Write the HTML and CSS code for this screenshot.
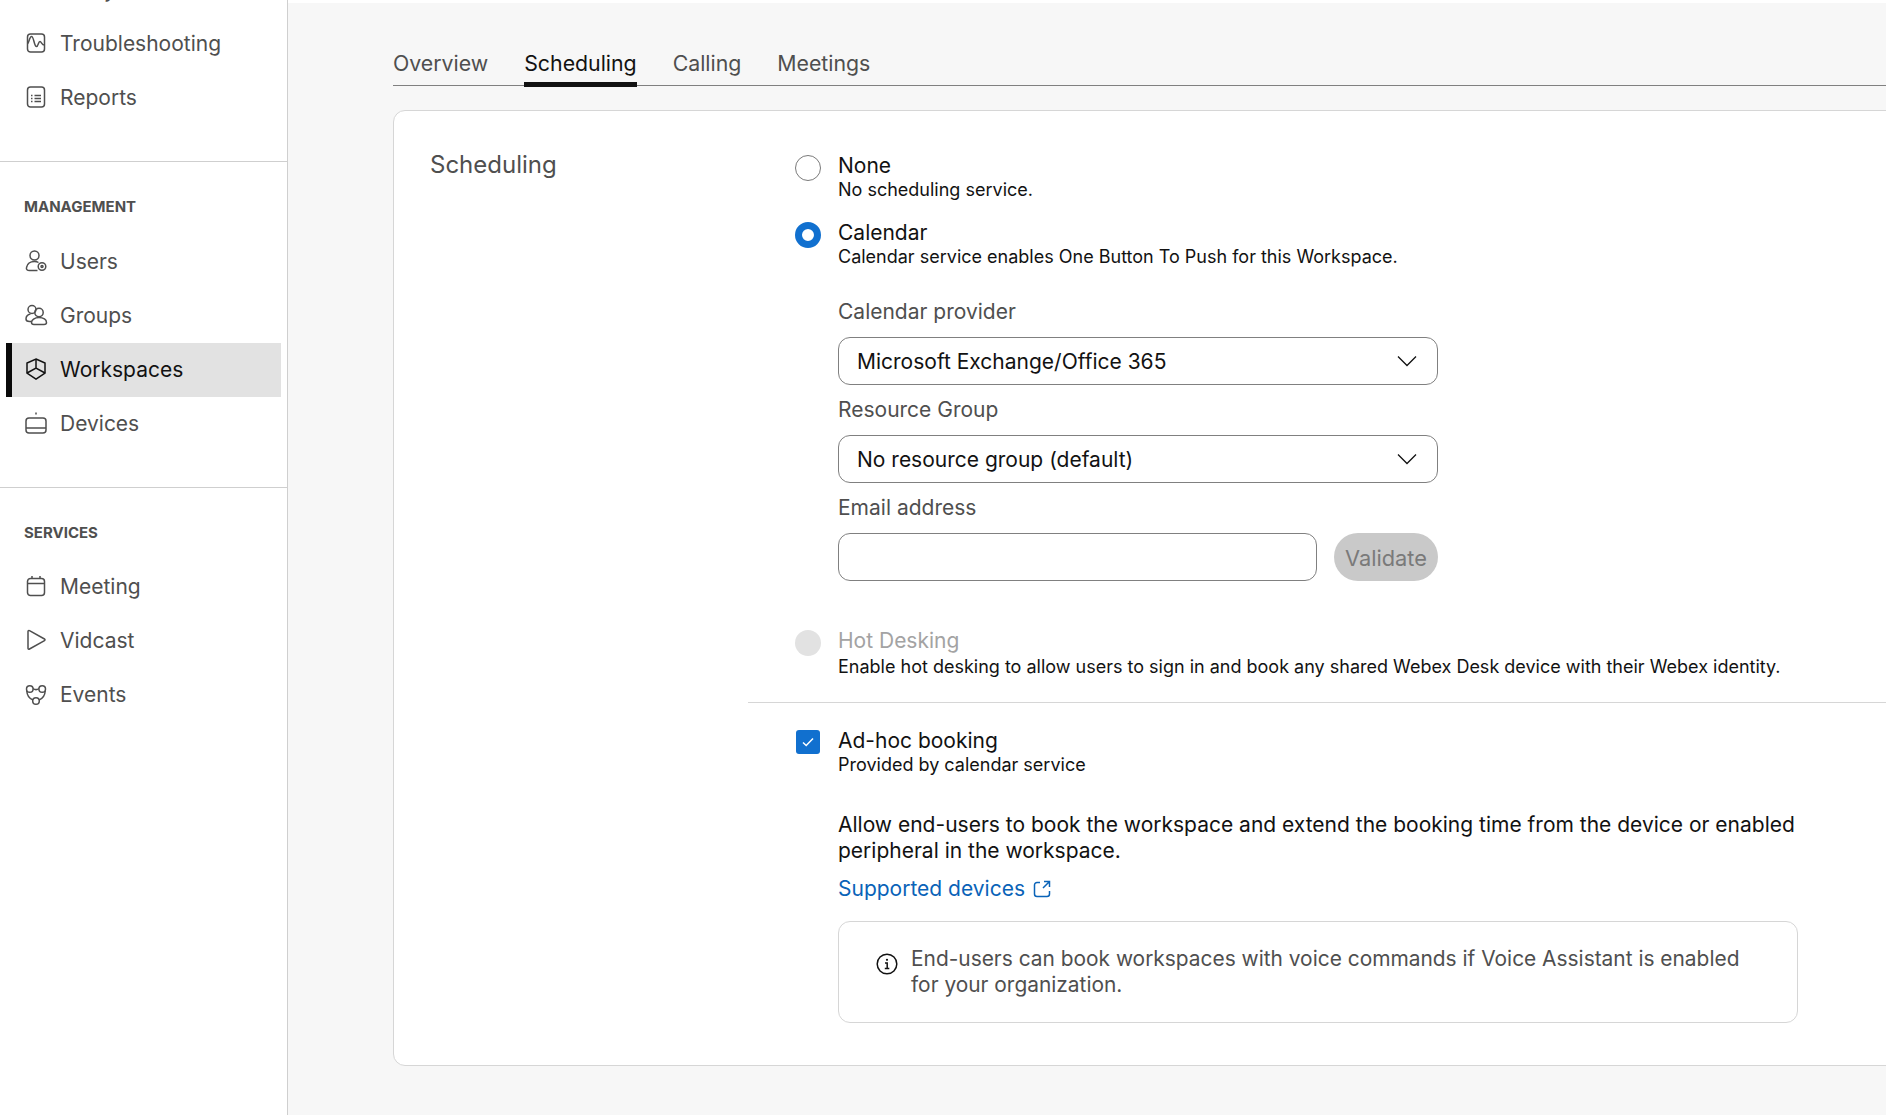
FILE: index.html
```html
<!DOCTYPE html>
<html lang="en">
<head>
  <meta charset="UTF-8">
  <title>Workspaces - Scheduling</title>
  <link rel="stylesheet" href="styles.css">
</head>
<body>
  <aside class="sidebar">
    <ul class="nav nav-first">
      <li class="nav-item"><span class="nav-icon"></span>Analytics</li>
      <li class="nav-item">
        <svg class="nav-icon" viewBox="0 0 24 24"><rect x="3.5" y="3" width="17" height="18" rx="3"/><path d="M3.500 13c1.500-1 2-7.500 4-7.500 2.500 0 2.500 10 5 10 1.800 0 1.700-5 3.500-5 1.500 0 1.500 3.500 4.500 3.500"/></svg>
        Troubleshooting
      </li>
      <li class="nav-item">
        <svg class="nav-icon" viewBox="0 0 24 24"><rect x="3.5" y="2" width="17" height="20" rx="3"/><path d="M7 10.500h1.500M10.500 10.500h6.500M7 13.500h1.500M10.500 13.500h6.500M7 16.500h1.500M10.500 16.500h6.500"/></svg>
        Reports
      </li>
    </ul>
    <div class="nav-section">
      <h2 class="nav-title">MANAGEMENT</h2>
      <ul class="nav">
        <li class="nav-item">
          <svg class="nav-icon" viewBox="0 0 24 24"><circle cx="10.500" cy="6.500" r="4.500"/><path d="M13.500 21.500H5.500c-2.200 0-3.500-1-3-3 .7-3.500 3.500-6 8-6 1.500 0 3 .3 4 1"/><circle cx="18" cy="17.500" r="3.800"/><circle cx="18" cy="17.500" r="1"/></svg>
          Users
        </li>
        <li class="nav-item">
          <svg class="nav-icon" viewBox="0 0 24 24"><circle cx="8" cy="6.500" r="4"/><circle cx="15" cy="9.500" r="4.200"/><path d="M6.500 11c-3 .6-4.500 2.700-4.500 5 0 1.500 1 2.500 3.500 2.500h1.500"/><path d="M15 14.500c-4.500 0-7.500 2.500-7.500 5 0 1.500 1 2 2.500 2h10c1.600 0 2.500-.7 2.500-2 0-2.700-3-5-7.500-5z"/></svg>
          Groups
        </li>
        <li class="nav-item active">
          <svg class="nav-icon" viewBox="0 0 24 24"><path d="M12 2l9 4v10l-9 6-9-6V6z"/><path d="M12 2v9M3 16l9-5 9 5"/></svg>
          Workspaces
        </li>
        <li class="nav-item">
          <svg class="nav-icon" viewBox="0 0 24 24"><rect x="2" y="7" width="20" height="15" rx="3"/><path d="M2 17h20M12 1.500v2"/></svg>
          Devices
        </li>
      </ul>
    </div>
    <div class="nav-section">
      <h2 class="nav-title">SERVICES</h2>
      <ul class="nav">
        <li class="nav-item">
          <svg class="nav-icon" viewBox="0 0 24 24"><rect x="3.5" y="4.500" width="17" height="17" rx="3"/><path d="M3.500 9.500h17M8 2v2.500M16 2v2.500"/></svg>
          Meeting
        </li>
        <li class="nav-item">
          <svg class="nav-icon" viewBox="0 0 24 24"><path d="M4 3.500c0-.9.800-1.200 1.500-.8l15 8.300c.7.400.7 1.300 0 1.700l-15 8.300c-.7.400-1.500 0-1.500-.8z"/></svg>
          Vidcast
        </li>
        <li class="nav-item">
          <svg class="nav-icon" viewBox="0 0 24 24"><circle cx="5.800" cy="7" r="3.300"/><circle cx="18.200" cy="7" r="3.300"/><circle cx="12" cy="19" r="3.300"/><path d="M9 6.500c2 1.500 4 1.500 6 0M2.800 9c.2 3.500 2.500 7.500 6.200 9M21.200 9c-.2 3.500-2.500 7.500-6.200 9"/></svg>
          Events
        </li>
      </ul>
    </div>
  </aside>

  <main class="main">
    <nav class="tabs">
      <span class="tab">Overview</span>
      <span class="tab tab-active">Scheduling</span>
      <span class="tab">Calling</span>
      <span class="tab">Meetings</span>
    </nav>

    <section class="card">
      <h1 class="card-title">Scheduling</h1>
      <div class="card-body">
        <div class="option-group">
          <div class="option">
            <span class="radio"></span>
            <div>
              <div class="option-label">None</div>
              <div class="option-help">No scheduling service.</div>
            </div>
          </div>
          <div class="option option-calendar">
            <span class="radio radio-on"></span>
            <div>
              <div class="option-label">Calendar</div>
              <div class="option-help">Calendar service enables One Button To Push for this Workspace.</div>
            </div>
          </div>

          <div class="fields">
            <div class="field-label">Calendar provider</div>
            <div class="select">
              Microsoft Exchange/Office 365
              <svg class="chevron" viewBox="0 0 20 12"><path d="M1 1.500l9 9 9-9"/></svg>
            </div>
            <div class="field-label">Resource Group</div>
            <div class="select">
              No resource group (default)
              <svg class="chevron" viewBox="0 0 20 12"><path d="M1 1.500l9 9 9-9"/></svg>
            </div>
            <div class="field-label">Email address</div>
            <div class="email-row">
              <div class="input"></div>
              <div class="btn-disabled">Validate</div>
            </div>
          </div>

          <div class="option option-hot">
            <span class="radio radio-disabled"></span>
            <div>
              <div class="option-label label-disabled">Hot Desking</div>
              <div class="option-help">Enable hot desking to allow users to sign in and book any shared Webex Desk device with their Webex identity.</div>
            </div>
          </div>
        </div>

        <div class="adhoc">
          <div class="option">
            <span class="checkbox">
              <svg viewBox="0 0 14 12"><path d="M2 6.500l3.200 3L12 2.500"/></svg>
            </span>
            <div>
              <div class="option-label">Ad-hoc booking</div>
              <div class="option-help">Provided by calendar service</div>
            </div>
          </div>
          <div class="adhoc-detail">
            <p class="adhoc-text">Allow end-users to book the workspace and extend the booking time from the device or enabled peripheral in the workspace.</p>
            <a class="link">Supported devices
              <svg class="link-icon" viewBox="0 0 18 18"><path d="M7 2.500H4A2.500 2.500 0 0 0 1.500 5v9A2.500 2.500 0 0 0 4 16.500h10a2.500 2.500 0 0 0 2.500-2.500v-3M11 1.500h5.500V7M16.500 1.500L10 8"/></svg>
            </a>
            <div class="notice">
              <svg class="notice-icon" viewBox="0 0 22 22"><circle cx="11" cy="11" r="9.800"/><path d="M9 10h2.200v5.500M8.800 15.500h4.500"/><circle class="dot" cx="11" cy="6.800" r="1.100"/></svg>
              <p>End-users can book workspaces with voice commands if Voice Assistant is enabled for your organization.</p>
            </div>
          </div>
        </div>
      </div>
    </section>
  </main>
</body>
</html>
```

FILE: styles.css
```css
* {
  box-sizing: border-box;
}
html, body {
  height: 100%;
}
body {
  margin: 0;
  display: flex;
  overflow: hidden;
  background: #fff;
  color: #121212;
  font-family: Inter, "Noto Sans", sans-serif;
  font-size: 21px;
}
ul {
  list-style: none;
  margin: 0;
  padding: 0;
}
p, h1, h2 {
  margin: 0;
  font-weight: 400;
}

/* sidebar */
.sidebar {
  width: 288px;
  flex: none;
  height: 100%;
  overflow: hidden;
  border-right: 1px solid #cfcfcf;
  color: #4f4f4f;
}
.nav-first {
  margin-top: -37px;
  padding-bottom: 36px;
}
.nav-section {
  border-top: 1px solid #cfcfcf;
  padding-top: 35px;
  padding-bottom: 36px;
}
.nav-title {
  font-size: 15px;
  font-weight: 700;
  line-height: 20px;
  padding-left: 24px;
  margin-bottom: 18px;
  color: #4f4f4f;
}
.nav-section:last-child .nav-title {
  margin-bottom: 17px;
}
.nav-item {
  display: flex;
  align-items: center;
  gap: 12px;
  height: 54px;
  margin: 0 6px;
  padding: 0 0 2px 12px;
  border-left: 6px solid transparent;
  white-space: nowrap;
}
.nav-icon {
  width: 24px;
  height: 24px;
  flex: none;
  fill: none;
  stroke: #4f4f4f;
  stroke-width: 1.5;
}
.nav-item.active {
  background: #e2e2e2;
  border-left-color: #0a0a0a;
  color: #121212;
}
.nav-item.active .nav-icon {
  stroke: #121212;
}

/* main */
.main {
  flex: 1;
  min-width: 0;
  margin-top: 3px;
  background: #f7f7f7;
  padding-left: 105px;
  overflow: hidden;
}
.tabs {
  display: flex;
  gap: 36px;
  height: 83px;
  padding-top: 44px;
  border-bottom: 1px solid #808080;
  color: #4f4f4f;
  font-size: 21.3px;
}
.tab {
  height: 40px;
  line-height: 32px;
}
.tab-active {
  color: #121212;
  border-bottom: 5px solid #121212;
}
.card {
  display: flex;
  width: 1700px;
  height: 956px;
  margin-top: 24px;
  background: #fff;
  border: 1px solid #d6d6d6;
  border-radius: 12px;
}
.card-title {
  width: 354px;
  padding: 39px 0 0 36px;
  font-size: 24px;
  line-height: 30px;
  color: #4f4f4f;
  flex: none;
}
.card-body {
  flex: 1;
}

/* options */
.option-group {
  height: 592px;
  padding: 42px 0 0 47px;
  border-bottom: 1px solid #d6d6d6;
}
.option {
  display: flex;
  gap: 17px;
}
.option-calendar {
  margin-top: 19px;
}
.radio {
  flex: none;
  width: 26px;
  height: 26px;
  margin-top: 2px;
  border-radius: 50%;
  border: 1px solid #7a7a7a;
  background: #fff;
}
.radio-on {
  border: 7px solid #1170cf;
}
.radio-disabled {
  border: none;
  background: #e2e2e2;
}
.option-label {
  line-height: 26px;
}
.label-disabled {
  color: #a3a3a3;
}
.option-help {
  font-size: 18px;
  line-height: 22px;
}
.option-hot .option-help {
  margin-top: 2px;
}

/* form */
.fields {
  margin: 30px 0 0 43px;
  width: 600px;
}
.field-label {
  line-height: 28px;
  color: #4f4f4f;
  margin-bottom: 11px;
}
.select, .input {
  height: 48px;
  border: 1px solid #808080;
  border-radius: 12px;
  background: #fff;
}
.select {
  display: flex;
  align-items: center;
  justify-content: space-between;
  padding: 0 20px 0 18px;
  margin-bottom: 11px;
}
.chevron {
  width: 20px;
  height: 12px;
  fill: none;
  stroke: #121212;
  stroke-width: 1.3;
}
.email-row {
  display: flex;
  gap: 17px;
}
.input {
  flex: 1;
}
.btn-disabled {
  width: 104px;
  height: 48px;
  line-height: 50px;
  font-size: 21.8px;
  text-align: center;
  border-radius: 24px;
  background: #c9c9c9;
  color: #7a7a7a;
}
.option-hot {
  margin-top: 47px;
}

/* ad-hoc */
.adhoc {
  padding: 25px 0 0 47px;
}
.checkbox {
  flex: none;
  width: 24px;
  height: 24px;
  margin: 2px 1px 0 1px;
  border-radius: 3px;
  background: #1170cf;
  display: flex;
  align-items: center;
  justify-content: center;
}
.checkbox svg {
  width: 14px;
  height: 12px;
  fill: none;
  stroke: #fff;
  stroke-width: 1.5;
}
.adhoc-detail {
  margin: 36px 0 0 43px;
  width: 960px;
}
.adhoc-text {
  line-height: 26px;
}
.link {
  display: flex;
  align-items: center;
  gap: 8px;
  margin-top: 11px;
  line-height: 28px;
  color: #0a63b8;
}
.link-icon {
  width: 18px;
  height: 18px;
  fill: none;
  stroke: #0a63b8;
  stroke-width: 1.5;
}
.notice {
  display: flex;
  gap: 13px;
  margin-top: 18px;
  height: 102px;
  padding: 24px 30px 0 37px;
  border: 1px solid #d6d6d6;
  border-radius: 12px;
  font-size: 20.9px;
  line-height: 26px;
  color: #4f4f4f;
}
.notice-icon {
  flex: none;
  width: 22px;
  height: 22px;
  margin-top: 7px;
  fill: none;
  stroke: #121212;
  stroke-width: 1.5;
}
.notice-icon .dot {
  fill: #121212;
  stroke: none;
}
```
